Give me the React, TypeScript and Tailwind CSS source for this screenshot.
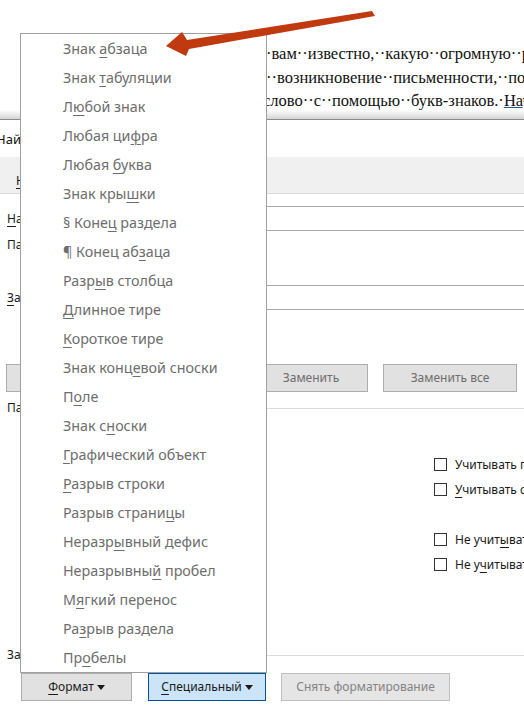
import type { ReactNode } from 'react'

// Special-characters dropdown entries: text before the access key, the key, text after
const specialItems: [string, string, string][] = [
  ['Знак ', 'а', 'бзаца'],
  ['Знак ', 'т', 'абуляции'],
  ['Л', 'ю', 'бой знак'],
  ['Любая ци', 'ф', 'ра'],
  ['Любая ', 'б', 'уква'],
  ['Знак кры', 'ш', 'ки'],
  ['§ Коне', 'ц', ' раздела'],
  ['¶ Конец аб', 'з', 'аца'],
  ['Разр', 'ы', 'в столбца'],
  ['', 'Д', 'линное тире'],
  ['', 'К', 'ороткое тире'],
  ['Знак конц', 'е', 'вой сноски'],
  ['П', 'о', 'ле'],
  ['Знак с', 'н', 'оски'],
  ['', 'Г', 'рафический объект'],
  ['', 'Р', 'азрыв строки'],
  ['Разрыв страни', 'ц', 'ы'],
  ['Неразр', 'ы', 'вный дефис'],
  ['Неразрывны', 'й', ' пробел'],
  ['М', 'я', 'гкий перенос'],
  ['Ра', 'з', 'рыв раздела'],
  ['Пр', 'о', 'белы'],
]

const ui = "font-['Noto_Sans','Open_Sans',sans-serif]"

function Key({ children }: { children: ReactNode }) {
  return <span className="underline underline-offset-[3px] decoration-1">{children}</span>
}

function Caret() {
  return (
    <svg width="8" height="5" viewBox="0 0 8 5" className="ml-[3px] inline-block">
      <path d="M0 0h8L4 5z" fill="#1a1a1a" />
    </svg>
  )
}

function Checkbox({ children }: { children: ReactNode }) {
  return (
    <div className="flex h-[13px] items-center gap-[8px] whitespace-nowrap">
      <span className="h-[13px] w-[13px] shrink-0 border border-[#333] bg-white" />
      <span className="text-[12px] text-[#1a1a1a]">{children}</span>
    </div>
  )
}

function Btn({ children, className = '' }: { children: ReactNode; className?: string }) {
  return (
    <div className={`flex h-[28px] items-center justify-center whitespace-nowrap border text-[12px] ${className}`}>
      <span className="flex items-center">{children}</span>
    </div>
  )
}

function GroupHeader({ label }: { label: string }) {
  return (
    <div className="flex h-[32px] items-center gap-2 pl-[17px]">
      <span className="whitespace-nowrap text-[12px] text-[#1a1a1a]">{label}</span>
      <div className="h-px flex-1 bg-[#dcdcdc]" />
    </div>
  )
}

export default function App() {
  return (
    <div className={`relative h-[719px] w-[524px] overflow-hidden bg-white ${ui}`}>
      {/* document behind the dialog, formatting marks on */}
      <div className="h-[110px] overflow-hidden whitespace-nowrap pt-[42px] font-['Liberation_Serif','Times_New_Roman',serif] text-[16.5px] leading-[23.5px] text-[#111]">
        <div className="pl-[266px]">·вам··известно,··какую··огромную··роль</div>
        <div className="pl-[266px]">··возникновение··письменности,··позволившее</div>
        <div className="pl-[263px]">слово··с··помощью··букв-знаков.·<span className="underline decoration-[#2b579a]">На</span>чнём</div>
      </div>
      <div className="h-[9px] bg-gradient-to-b from-white to-[#d4d4d4]" />

      {/* Find and Replace dialog */}
      <div className="-ml-[10px] w-[720px] border-t border-[#8a8a8a] bg-white">
        <div className="flex h-[37px] items-center pl-[6px] pt-[3px] text-[13px] text-[#111]">Найти и заменить</div>
        <div className="flex h-[37px] items-end gap-6 border-b border-[#d9d9d9] bg-[#f0f0f0] pb-[3px] pl-[26px] text-[12px] text-[#1a1a1a]">
          <span><Key>Н</Key>айти</span>
          <span className="border-x border-t border-[#d9d9d9] bg-white px-3 pt-1"><Key>З</Key>аменить</span>
          <span><Key>П</Key>ерейти</span>
        </div>

        <div className="h-[12px]" />
        <div className="flex h-[25px] items-center text-[12px] text-[#1a1a1a]">
          <span className="w-[120px] pl-[17px]"><Key>Н</Key>айти:</span>
          <div className="h-[25px] flex-1 border border-[#a8a8a8]" />
        </div>
        <div className="flex h-[28px] items-center text-[12px] text-[#1a1a1a]">
          <span className="w-[120px] pl-[17px]">Параметры:</span>
          <span>Вперед</span>
        </div>
        <div className="h-[26px]" />
        <div className="flex h-[25px] items-center text-[12px] text-[#1a1a1a]">
          <span className="w-[120px] pl-[17px]"><Key>З</Key>аменить на:</span>
          <div className="h-[25px] flex-1 border border-[#a8a8a8]" />
        </div>
        <div className="h-[54px]" />

        <div className="flex h-[28px] gap-[15px] pl-[16px]">
          <Btn className="w-[100px] border-[#adadad] bg-[#e1e1e1] text-[#1a1a1a]">&lt;&lt; <Key>М</Key>еньше</Btn>
          <div className="w-[118px]" />
          <Btn className="w-[114px] border-[#adadad] bg-[#e1e1e1] text-[#6d6d6d]">Заменить</Btn>
          <Btn className="w-[134px] border-[#adadad] bg-[#e1e1e1] text-[#6d6d6d]">Заменить все</Btn>
          <Btn className="w-[114px] border-[#adadad] bg-[#e1e1e1] text-[#1a1a1a]">Найти далее</Btn>
        </div>

        <GroupHeader label="Параметры поиска" />
        <div className="h-[34px]" />
        <div className="flex">
          <div className="flex w-[444px] flex-col gap-[12px] pl-[38px]">
            <Checkbox>Учитывать регистр</Checkbox>
            <Checkbox>Только слово целиком</Checkbox>
            <Checkbox>Подстановочные знаки</Checkbox>
            <Checkbox>Произносится как</Checkbox>
          </div>
          <div className="flex flex-col">
            <Checkbox>Учитывать префикс</Checkbox>
            <div className="h-[12px]" />
            <Checkbox><Key>У</Key>читывать суффикс</Checkbox>
            <div className="h-[37px]" />
            <Checkbox>Не учит<Key>ы</Key>вать знаки препинания</Checkbox>
            <div className="h-[12px]" />
            <Checkbox>Не у<Key>ч</Key>итывать пробелы</Checkbox>
          </div>
        </div>
        <div className="h-[68px]" />

        <GroupHeader label="Заменить" />
        <div className="h-[2px]" />
        <div className="flex h-[27px] pl-[31px]">
          <Btn className="h-[27px] w-[111px] border-[#adadad] bg-[#e1e1e1] text-[#1a1a1a]">
            <Key>Ф</Key>ормат<Caret />
          </Btn>
          <div className="w-[16px]" />
          <Btn className="h-[27px] w-[118px] border-[#005499] bg-[#cce4f7] text-[#1a1a1a]">
            <Key>С</Key>пециальный<Caret />
          </Btn>
          <div className="w-[15px]" />
          <Btn className="h-[28px] w-[169px] border-[#bfbfbf] bg-[#e5e5e5] text-[#838383]">Снять форматирование</Btn>
        </div>
      </div>

      {/* open "Специальный" menu */}
      <div className="absolute left-[20px] top-[33px] w-[247px] border border-[#a0a0a0] bg-white">
        {specialItems.map(([a, k, b], i) => (
          <div key={i} className="flex h-[29px] items-center whitespace-pre pl-[42px] text-[14.3px] text-[#6d6d6d]">
            <span>
              {a}
              <Key>{k}</Key>
              {b}
            </span>
          </div>
        ))}
      </div>

      {/* callout arrow */}
      <svg className="pointer-events-none absolute left-0 top-0" width="524" height="719">
        <polygon points="166,46 182,32 187,40 372,11 375,16 189,49 186,56" fill="#c0390f" />
      </svg>
    </div>
  )
}
